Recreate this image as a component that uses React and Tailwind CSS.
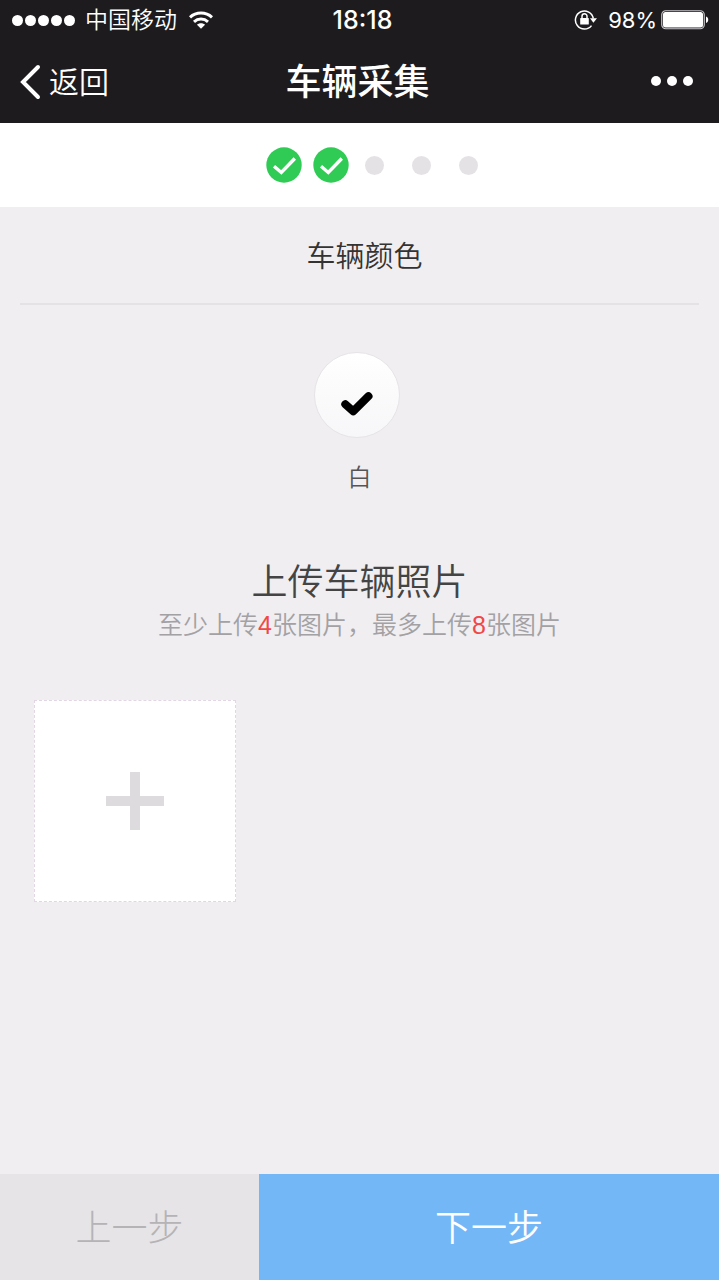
const steps = [true, true, false, false, false];

function StatusBar() {
  return (
    <div className="grid h-10 grid-cols-3 items-center pl-3 pr-[10px] text-[23px] leading-8">
      <div className="flex items-center whitespace-nowrap font-[350]">
        <span className="flex gap-[2px]" role="img" aria-label="信号">
          {[0, 1, 2, 3, 4].map((i) => (
            <span key={i} className="size-[11px] rounded-full bg-white" />
          ))}
        </span>
        <span className="ml-[10px]">中国移动</span>
        <svg className="ml-3 h-[18px] w-6" viewBox="0 0 24 18" fill="none" stroke="white" strokeWidth="3" aria-hidden="true">
          <path d="M1 6.300C7 .6 17 .6 23 6.300" />
          <path d="M5 10.800c4-3.600 10-3.600 14 0" />
          <path d="M8 13.800c2-2 6-2 8 0L12 17.800z" fill="white" stroke="none" />
        </svg>
      </div>
      <div className="pl-1 text-center text-[25px] font-medium">18:18</div>
      <div className="flex items-center justify-end whitespace-nowrap">
        <svg className="h-[22px] w-6" viewBox="0 0 24 22" fill="none" stroke="white" strokeWidth="1.500" aria-hidden="true">
          <path d="M17.500 16.600A9 9 0 1 1 19.300 9.500" />
          <path d="M16 9.300h7L19.400 13.800z" fill="white" stroke="none" />
          <rect x="6.200" y="9" width="8.600" height="6.500" rx=".6" fill="white" stroke="none" />
          <path d="M8 9.500V7.300a2.500 2.500 0 0 1 5 0v2.200" />
        </svg>
        <span className="ml-[10px] text-[22px]">98%</span>
        <svg className="ml-1 h-5 w-12" viewBox="0 0 48 20" aria-hidden="true">
          <rect x=".75" y=".75" width="42.500" height="18" rx="4" fill="none" stroke="#c9c7cb" strokeWidth="1.200" />
          <rect x="2" y="2" width="40" height="15.500" rx="2.500" fill="white" />
          <path d="M45 6.500c3 1 3 5.500 0 6.500z" fill="white" />
        </svg>
      </div>
    </div>
  );
}

function NavBar() {
  return (
    <div className="grid h-[83px] grid-cols-3 items-center pl-5 pr-6">
      <button type="button" className="flex items-center gap-2 text-[30px] leading-10 font-[350]">
        <svg className="h-9 w-[21px]" viewBox="0 0 21 36" fill="none" stroke="white" strokeWidth="4" strokeLinecap="round" aria-hidden="true">
          <path d="M18 3L3 18l15 15" />
        </svg>
        返回
      </button>
      <h1 className="text-center text-4xl font-medium whitespace-nowrap">车辆采集</h1>
      <button type="button" aria-label="更多" className="flex justify-end gap-[6px] pt-3 pb-[14px] pr-[2px]">
        <span className="size-[10px] rounded-full bg-white" />
        <span className="size-[10px] rounded-full bg-white" />
        <span className="size-[10px] rounded-full bg-white" />
      </button>
    </div>
  );
}

function Steps() {
  const done = steps.filter((s) => s);
  const open = steps.filter((s) => !s);
  return (
    <div className="flex h-21 items-center justify-center gap-4 bg-white pl-6">
      <ol className="flex gap-[11px]">
        {done.map((_, i) => (
          <li key={i}>
            <svg className="size-9" viewBox="0 0 36 36" role="img" aria-label="已完成">
              <circle cx="18" cy="18" r="17.700" fill="#2fcb54" />
              <path d="M8 19.300l7.300 6.200L28.800 11.500" fill="none" stroke="white" strokeWidth="3.400" />
            </svg>
          </li>
        ))}
      </ol>
      <ol className="flex gap-7">
        {open.map((_, i) => (
          <li key={i} className="size-[19px] rounded-full bg-[#e5e2e6]" />
        ))}
      </ol>
    </div>
  );
}

export default function App() {
  return (
    <div className="flex min-h-screen flex-col bg-[#f0eef1] font-['Inter','Noto_Sans_CJK_SC',sans-serif]">
      <header className="bg-[#1d1b1e] text-white">
        <StatusBar />
        <NavBar />
      </header>
      <Steps />
      <main className="flex-1">
        <section className="px-5">
          <h2 className="border-b-2 border-[#e4e2e5] pt-[30px] pb-[26px] pl-[10px] text-center text-[29px] leading-10 font-[350] text-[#333]">
            车辆颜色
          </h2>
          <label className="mx-auto mt-[47px] flex w-24 cursor-pointer flex-col items-center">
            <input type="radio" name="color" defaultChecked className="peer sr-only" />
            <span className="mr-[6px] flex size-[86px] items-center justify-center rounded-full border border-[#e6e4e7] bg-linear-to-b from-white to-[#f7f6f8] pt-4">
              <svg
                className="h-6 w-8 overflow-visible"
                viewBox="0 0 32 24"
                fill="none"
                stroke="black"
                strokeWidth="8"
                strokeLinecap="round"
                strokeLinejoin="round"
                aria-hidden="true"
              >
                <path d="M4.300 13.200L12.200 20.300L27.500 5.200" />
              </svg>
            </span>
            <span className="mt-6 text-2xl font-[350] text-[#555]">白</span>
          </label>
        </section>
        <section className="px-[34px] pt-16">
          <h2 className="text-center text-4xl leading-[48px] font-[350] text-[#444]">上传车辆照片</h2>
          <p className="text-center text-[25px] leading-[38px] font-[350] text-[#a3a1a4]">
            至少上传<span className="font-['Liberation_Sans'] text-[#f04848]">4</span>张图片，最多上传
            <span className="font-['Liberation_Sans'] text-[#f04848]">8</span>张图片
          </p>
          <button
            type="button"
            aria-label="添加图片"
            className="mt-14 flex size-[202px] items-center justify-center border border-dashed border-[#e2d6e5] bg-white"
          >
            <svg className="size-[58px]" viewBox="0 0 58 58" fill="none" stroke="#dddbde" strokeWidth="10" aria-hidden="true">
              <path d="M29 0v58M0 29h58" />
            </svg>
          </button>
        </section>
      </main>
      <footer className="flex h-[106px] text-4xl">
        <button type="button" className="w-[36%] bg-[#e6e4e7] pt-[2px] font-light text-[#b5b3b6]">上一步</button>
        <button type="button" className="flex-1 bg-[#74b7f7] pt-[2px] font-[350] text-white">下一步</button>
      </footer>
    </div>
  );
}
